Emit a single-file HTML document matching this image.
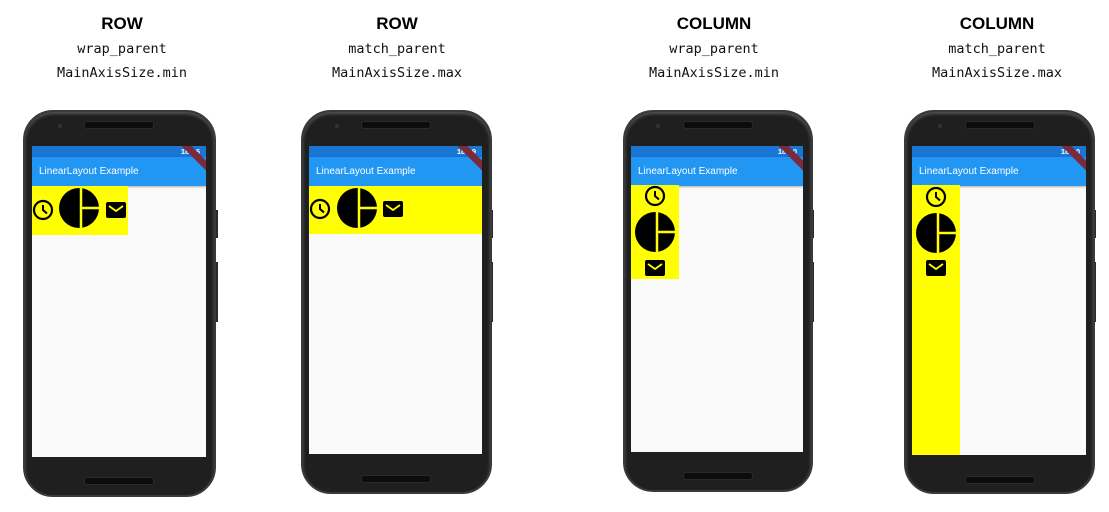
<!DOCTYPE html>
<html><head><style>
body{margin:0;width:1109px;height:512px;background:#fff;position:relative;overflow:hidden;font-family:"Liberation Sans",sans-serif}
.t{position:absolute;width:200px;text-align:center}
.h{font-weight:bold;font-size:17px;top:14px}
.m{font-family:"DejaVu Sans Mono","Liberation Mono",monospace;font-size:13.5px;color:#111}
.ph{position:absolute;background:#1f1f1f;border-radius:30px;border:2px solid #3a3a3a;box-sizing:border-box;box-shadow:inset 0 2px 3px #555}
.sp{position:absolute;height:6px;background:#0c0c0c;border-radius:3px;border:1px solid #2a2a2a}
.cam{position:absolute;width:4px;height:4px;border-radius:2px;background:#333}
.scr{position:absolute;background:#fafafa;overflow:hidden}
.sb{position:absolute;left:0;right:0;top:0;height:11px;background:#1976d2;color:#fff;font-size:7.5px;font-weight:bold}
.ab{position:absolute;left:0;right:0;top:11px;height:29px;background:#2196f3;color:#fff;font-size:10px;line-height:29px;padding-left:7px;box-shadow:0 1px 2px rgba(0,0,0,.3)}
.y{position:absolute;background:#ff0;top:40px}
.btn{position:absolute;width:4px;background:#2a2a2a}
.rib{position:absolute;right:-17px;top:8px;width:50px;height:7px;background:#7a2a3a;transform:rotate(45deg);z-index:2}
svg{position:absolute;overflow:visible}
</style></head><body>
<div class="t h" style="left:22px">ROW</div>
<div class="t m" style="left:22px;top:41px">wrap_parent</div>
<div class="t m" style="left:22px;top:65px">MainAxisSize.min</div>
<div class="t h" style="left:297px">ROW</div>
<div class="t m" style="left:297px;top:41px">match_parent</div>
<div class="t m" style="left:297px;top:65px">MainAxisSize.max</div>
<div class="t h" style="left:614px">COLUMN</div>
<div class="t m" style="left:614px;top:41px">wrap_parent</div>
<div class="t m" style="left:614px;top:65px">MainAxisSize.min</div>
<div class="t h" style="left:897px">COLUMN</div>
<div class="t m" style="left:897px;top:41px">match_parent</div>
<div class="t m" style="left:897px;top:65px">MainAxisSize.max</div>

<!-- phone 1 -->
<div class="btn" style="left:214px;top:210px;height:28px"></div><div class="btn" style="left:214px;top:262px;height:60px"></div>
<div class="ph" style="left:23px;top:110px;width:193px;height:387px"></div>
<div class="cam" style="left:58px;top:124px"></div>
<div class="sp" style="left:84px;top:121px;width:68px"></div><div class="sp" style="left:84px;top:477px;width:68px"></div>
<div class="scr" style="left:32px;top:146px;width:174px;height:311px">
<div class="sb"><span style="position:absolute;right:6px;top:1px">18:06</span></div>
<div class="ab">LinearLayout Example</div><div class="rib"></div>
<div class="y" style="left:0;width:96px;height:49px"></div></div>

<!-- phone 2 -->
<div class="btn" style="left:489px;top:210px;height:28px"></div><div class="btn" style="left:489px;top:262px;height:60px"></div>
<div class="ph" style="left:301px;top:110px;width:191px;height:384px"></div>
<div class="cam" style="left:335px;top:124px"></div>
<div class="sp" style="left:361px;top:121px;width:68px"></div><div class="sp" style="left:361px;top:475px;width:68px"></div>
<div class="scr" style="left:309px;top:146px;width:173px;height:308px">
<div class="sb"><span style="position:absolute;right:6px;top:1px">18:09</span></div>
<div class="ab">LinearLayout Example</div><div class="rib"></div>
<div class="y" style="left:0;width:173px;height:48px"></div></div>

<!-- phone 3 -->
<div class="btn" style="left:810px;top:210px;height:28px"></div><div class="btn" style="left:810px;top:262px;height:60px"></div>
<div class="ph" style="left:623px;top:110px;width:190px;height:382px"></div>
<div class="cam" style="left:656px;top:124px"></div>
<div class="sp" style="left:683px;top:121px;width:68px"></div><div class="sp" style="left:683px;top:472px;width:68px"></div>
<div class="scr" style="left:631px;top:146px;width:172px;height:306px">
<div class="sb"><span style="position:absolute;right:6px;top:1px">18:10</span></div>
<div class="ab">LinearLayout Example</div><div class="rib"></div>
<div class="y" style="left:0;width:48px;height:94px;top:39px"></div></div>

<!-- phone 4 -->
<div class="btn" style="left:1092px;top:210px;height:28px"></div><div class="btn" style="left:1092px;top:262px;height:60px"></div>
<div class="ph" style="left:904px;top:110px;width:191px;height:384px"></div>
<div class="cam" style="left:938px;top:124px"></div>
<div class="sp" style="left:965px;top:121px;width:68px"></div><div class="sp" style="left:965px;top:476px;width:68px"></div>
<div class="scr" style="left:912px;top:146px;width:174px;height:309px">
<div class="sb"><span style="position:absolute;right:6px;top:1px">18:10</span></div>
<div class="ab">LinearLayout Example</div><div class="rib"></div>
<div class="y" style="left:0;width:48px;height:270px;top:39px"></div></div>

<svg width="1109" height="512" style="left:0;top:0">
<defs>
<g id="clk"><circle r="9" fill="none" stroke="#000" stroke-width="2.2"/><path d="M0 -5V0L4 3.5" fill="none" stroke="#000" stroke-width="2"/></g>
<g id="pie"><circle r="20" fill="#000"/><path d="M2 -21V21M2 0H21" stroke="#ff0" stroke-width="2.5"/></g>
<g id="mail"><rect x="-10" y="-8" width="20" height="16" rx="2" fill="#000"/><path d="M-7 -4L0 1L7 -4" fill="none" stroke="#ff0" stroke-width="1.8"/></g>
</defs>
<use href="#clk" x="43" y="210"/><use href="#pie" x="79" y="208"/><use href="#mail" x="116" y="210"/>
<use href="#clk" x="320" y="209"/><use href="#pie" x="357" y="208"/><use href="#mail" x="393" y="209"/>
<use href="#clk" x="655" y="196"/><use href="#pie" x="655" y="232"/><use href="#mail" x="655" y="268"/>
<use href="#clk" x="936" y="197"/><use href="#pie" x="936" y="233"/><use href="#mail" x="936" y="268"/>
</svg>
</body></html>
